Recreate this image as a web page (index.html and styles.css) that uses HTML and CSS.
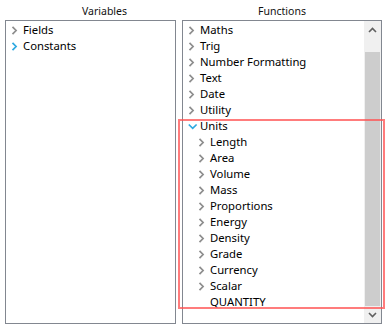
FILE: index.html
```html
<!DOCTYPE html>
<html>
<head>
<meta charset="utf-8">
<link rel="stylesheet" href="styles.css">
</head>
<body>
<div class="panes">
  <section class="pane pane-vars">
    <div class="pane-title title-vars">Variables</div>
    <div class="listbox">
      <ul class="tree">
        <li class="row"><svg class="chev" viewBox="0 0 12 9"><path d="M1.5 0.8 L5.1 4.5 L1.5 8.2"/></svg><span class="label">Fields</span></li>
        <li class="row"><svg class="chev hot" viewBox="0 0 12 9"><path d="M1.5 0.8 L5.1 4.5 L1.5 8.2"/></svg><span class="label">Constants</span></li>
      </ul>
    </div>
  </section>
  <section class="pane pane-funcs">
    <div class="pane-title">Functions</div>
    <div class="listbox funcs-box">
      <ul class="tree">
        <li class="row"><svg class="chev" viewBox="0 0 12 9"><path d="M1.5 0.8 L5.1 4.5 L1.5 8.2"/></svg><span class="label">Maths</span></li>
        <li class="row"><svg class="chev" viewBox="0 0 12 9"><path d="M1.5 0.8 L5.1 4.5 L1.5 8.2"/></svg><span class="label">Trig</span></li>
        <li class="row"><svg class="chev" viewBox="0 0 12 9"><path d="M1.5 0.8 L5.1 4.5 L1.5 8.2"/></svg><span class="label">Number Formatting</span></li>
        <li class="row"><svg class="chev" viewBox="0 0 12 9"><path d="M1.5 0.8 L5.1 4.5 L1.5 8.2"/></svg><span class="label">Text</span></li>
        <li class="row"><svg class="chev" viewBox="0 0 12 9"><path d="M1.5 0.8 L5.1 4.5 L1.5 8.2"/></svg><span class="label">Date</span></li>
        <li class="row"><svg class="chev" viewBox="0 0 12 9"><path d="M1.5 0.8 L5.1 4.5 L1.5 8.2"/></svg><span class="label">Utility</span></li>
        <li class="row"><svg class="chev hot" viewBox="0 0 12 9"><path d="M0.8 2.5 L4.7 6.3 L8.6 2.5"/></svg><span class="label">Units</span></li>
        <li class="row child"><svg class="chev" viewBox="0 0 12 9"><path d="M1.5 0.8 L5.1 4.5 L1.5 8.2"/></svg><span class="label">Length</span></li>
        <li class="row child"><svg class="chev" viewBox="0 0 12 9"><path d="M1.5 0.8 L5.1 4.5 L1.5 8.2"/></svg><span class="label">Area</span></li>
        <li class="row child"><svg class="chev" viewBox="0 0 12 9"><path d="M1.5 0.8 L5.1 4.5 L1.5 8.2"/></svg><span class="label">Volume</span></li>
        <li class="row child"><svg class="chev" viewBox="0 0 12 9"><path d="M1.5 0.8 L5.1 4.5 L1.5 8.2"/></svg><span class="label">Mass</span></li>
        <li class="row child"><svg class="chev" viewBox="0 0 12 9"><path d="M1.5 0.8 L5.1 4.5 L1.5 8.2"/></svg><span class="label">Proportions</span></li>
        <li class="row child"><svg class="chev" viewBox="0 0 12 9"><path d="M1.5 0.8 L5.1 4.5 L1.5 8.2"/></svg><span class="label">Energy</span></li>
        <li class="row child"><svg class="chev" viewBox="0 0 12 9"><path d="M1.5 0.8 L5.1 4.5 L1.5 8.2"/></svg><span class="label">Density</span></li>
        <li class="row child"><svg class="chev" viewBox="0 0 12 9"><path d="M1.5 0.8 L5.1 4.5 L1.5 8.2"/></svg><span class="label">Grade</span></li>
        <li class="row child"><svg class="chev" viewBox="0 0 12 9"><path d="M1.5 0.8 L5.1 4.5 L1.5 8.2"/></svg><span class="label">Currency</span></li>
        <li class="row child"><svg class="chev" viewBox="0 0 12 9"><path d="M1.5 0.8 L5.1 4.5 L1.5 8.2"/></svg><span class="label">Scalar</span></li>
        <li class="row child"><span class="chev-space"></span><span class="label">QUANTITY</span></li>
      </ul>
      <div class="scrollbar">
        <div class="sb-btn"><svg width="9" height="6" viewBox="0 0 9 6"><path d="M1 5 L4.5 1.5 L8 5" fill="none" stroke="#606060" stroke-width="1.6"/></svg></div>
        <div class="sb-track"><div class="sb-thumb"></div></div>
        <div class="sb-btn"><svg width="9" height="6" viewBox="0 0 9 6"><path d="M1 1 L4.5 4.5 L8 1" fill="none" stroke="#606060" stroke-width="1.6"/></svg></div>
      </div>
      <div class="highlight"></div>
    </div>
  </section>
</div>
</body>
</html>
```

FILE: styles.css
```css
html, body {
  margin: 0;
  padding: 0;
  background: #ffffff;
}
body {
  font-family: "Noto Sans", "Open Sans", sans-serif;
  font-size: 11.3px;
  color: #000;
}
.panes {
  display: flex;
  gap: 6px;
  padding: 0 0 0 5px;
}
.pane {
  display: flex;
  flex-direction: column;
}
.pane-vars { width: 171px; }
.pane-funcs { width: 200px; }
.pane-title {
  height: 20px;
  line-height: 20px;
  text-align: center;
  font-size: 10.5px;
  margin-top: 1px;
  margin-bottom: -1px;
  color: #111;
}
.title-vars { padding-left: 28px; }
.listbox {
  position: relative;
  height: 304px;
  box-sizing: border-box;
  border: 1px solid #828790;
  background: #fff;
  display: flex;
}
.tree {
  list-style: none;
  margin: 0;
  padding: 1px 0 0 0;
  flex: 1;
}
.row {
  height: 16px;
  line-height: 16px;
  display: flex;
  align-items: center;
  padding-left: 5px;
  white-space: nowrap;
}
.row.child { padding-left: 15px; }
.chev {
  width: 12px;
  height: 9px;
  flex: none;
  fill: none;
  stroke: #8e8e8e;
  stroke-width: 1.7;
}
.chev.hot { stroke: #2fa9e1; }
.chev-space {
  width: 12px;
  flex: none;
}
.label { line-height: 16px; }
.scrollbar {
  width: 17px;
  flex: none;
  background: #f0f0f0;
  display: flex;
  flex-direction: column;
}
.sb-btn {
  height: 17px;
  display: flex;
  align-items: center;
  justify-content: center;
}
.sb-track {
  flex: 1;
  display: flex;
  flex-direction: column;
  padding-top: 14px;
}
.sb-thumb {
  flex: 1;
  margin: 0 1px;
  background: #cdcdcd;
}
.highlight {
  position: absolute;
  left: -5px;
  top: 98px;
  width: 207px;
  height: 190px;
  box-sizing: border-box;
  border: 2px solid rgba(255, 80, 80, 0.75);
  pointer-events: none;
}
```
